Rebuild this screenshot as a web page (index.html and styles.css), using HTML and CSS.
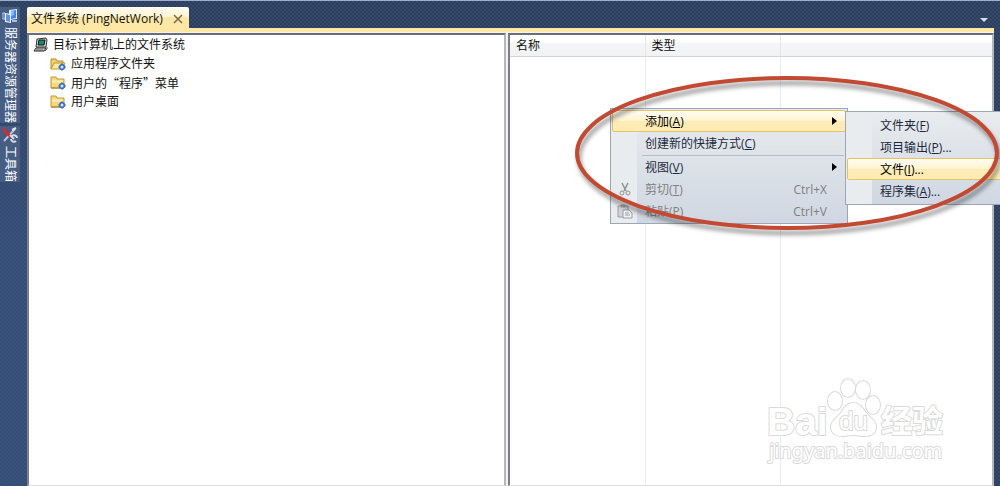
FILE: index.html
```html
<!DOCTYPE html>
<html lang="zh-CN">
<head>
<meta charset="utf-8">
<title>文件系统 (PingNetWork)</title>
<link rel="stylesheet" href="styles.css">
</head>
<body>
<div class="app">
  <nav class="rail" aria-label="工具窗口">
    <button class="rail-tab" type="button">
      <svg class="rail-icon" width="16" height="16" viewBox="0 0 16 16" aria-hidden="true">
        <path d="M7 2l8-1v10l-8 1z" fill="#dce8fa"/><path d="M9 3l5-1v8l-5 1z" fill="#3f86ee"/><path d="M9 3l3-1v5l-3 1z" fill="#8db9f7"/>
        <path d="M0 5l3-1v8l-3-1z" fill="#9fb4d4"/><path d="M0 7h3M0 9h3" stroke="#5574a4"/>
        <path d="M3 5l6 1v9l-6-1z" fill="#f2f6fc"/><path d="M4 6l4 1v7l-4-1z" fill="#5b94e8"/>
        <path d="M10 12h5v2h-5z" fill="#aebfda"/>
      </svg>
      <span class="rail-label">服务器资源管理器</span>
    </button>
    <button class="rail-tab" type="button">
      <svg class="rail-icon" width="16" height="16" viewBox="0 0 16 16" aria-hidden="true">
        <path d="M2 14L13 2" stroke="#b9c3d2" stroke-width="2"/>
        <path d="M10 3l4-2" stroke="#dfe5ee" stroke-width="2"/>
        <path d="M1 2l8 8" stroke="#dd2630" stroke-width="3"/>
        <path d="M8 8l4 4" stroke="#d8dfe9" stroke-width="2"/>
        <path d="M9 12a3 3 0 0 0 5 2M10 9a3 3 0 0 1 5 2" stroke="#d5deea" stroke-width="2" fill="none"/>
      </svg>
      <span class="rail-label">工具箱</span>
    </button>
  </nav>

  <main class="workspace">
    <header class="tabs">
      <div class="tab">
        <span>文件系统 (PingNetWork)</span>
        <button class="tab-close" type="button" aria-label="关闭">
          <svg width="10" height="10" viewBox="0 0 10 10"><path d="M1 1l8 8M9 1L1 9" stroke="#756a4b" stroke-width="1.5"/></svg>
        </button>
      </div>
      <button class="tab-list" type="button" aria-label="打开的文件">
        <svg width="8" height="4" viewBox="0 0 8 4"><path d="M0 0h8L4 4z" fill="#d5dceb"/></svg>
      </button>
    </header>

    <div class="panes">
      <section class="pane tree">
        <div class="node root">
          <svg width="16" height="16" viewBox="0 0 16 16" aria-hidden="true">
            <path d="M4 2l9-1 1 2-1 7H3z" fill="#d9d9d0" stroke="#333"/>
            <path d="M6 3h6l-1 5H5z" fill="#168b7b" stroke="#111"/>
            <path d="M3 11h10l-2 3H1z" fill="#e4e4dc" stroke="#222"/><path d="M3 13h7M14 10v2l-2 2" stroke="#555" fill="none"/>
          </svg>
          <span>目标计算机上的文件系统</span>
        </div>
        <div class="node">
          <svg width="17" height="16" viewBox="0 0 17 16" aria-hidden="true">
            <path d="M1 13V3h5l1 2h6v3" fill="#f2cf6c" stroke="#b48a2e"/>
            <path d="M1 13l3-6h11l-3 6z" fill="#ffeaa0" stroke="#c1963a"/>
            <path d="M12 7l4 4-4 4-4-4z" fill="#3c6fc4"/><circle cx="12" cy="11" r="3" fill="#3c6fc4"/><circle cx="12" cy="11" r="1.5" fill="#d5e6ff"/>
          </svg>
          <span>应用程序文件夹</span>
        </div>
        <div class="node">
          <svg width="17" height="16" viewBox="0 0 17 16" aria-hidden="true">
            <path d="M1 2h5l1 2h7v9H1z" fill="#f5d77d" stroke="#c09a40"/><path d="M2 6h11M2 7h11" stroke="#fff3bd"/><path d="M1 13h11" stroke="#a47a25"/>
            <path d="M12 7l4 4-4 4-4-4z" fill="#3c6fc4"/><circle cx="12" cy="11" r="3" fill="#3c6fc4"/><circle cx="12" cy="11" r="1.5" fill="#d5e6ff"/>
          </svg>
          <span class="cjk">用户的“程序”菜单</span>
        </div>
        <div class="node">
          <svg width="17" height="16" viewBox="0 0 17 16" aria-hidden="true">
            <path d="M1 2h5l1 2h7v9H1z" fill="#f5d77d" stroke="#c09a40"/><path d="M2 6h11M2 7h11" stroke="#fff3bd"/><path d="M1 13h11" stroke="#a47a25"/>
            <path d="M12 7l4 4-4 4-4-4z" fill="#3c6fc4"/><circle cx="12" cy="11" r="3" fill="#3c6fc4"/><circle cx="12" cy="11" r="1.5" fill="#d5e6ff"/>
          </svg>
          <span>用户桌面</span>
        </div>
      </section>

      <section class="pane list">
        <table class="files">
          <thead><tr><th class="col-name">名称</th><th class="col-type">类型</th><th></th></tr></thead>
          <tbody><tr><td></td><td></td><td></td></tr></tbody>
        </table>
      </section>
    </div>
  </main>

  <div class="menu context" role="menu">
    <button class="item active" type="button" role="menuitem"><span class="glyph"></span><span class="text">添加(<u>A</u>)</span><span class="arrow"></span></button>
    <button class="item" type="button" role="menuitem"><span class="glyph"></span><span class="text">创建新的快捷方式(<u>C</u>)</span></button>
    <div class="separator" role="separator"></div>
    <button class="item" type="button" role="menuitem"><span class="glyph"></span><span class="text">视图(<u>V</u>)</span><span class="arrow"></span></button>
    <button class="item" type="button" role="menuitem" disabled>
      <span class="glyph"><svg width="12" height="14" viewBox="0 0 12 14" fill="none" stroke="#8d9299"><path d="M3 1l4 8M9 1L5 9" stroke-width="1.5"/><circle cx="3" cy="11" r="2"/><circle cx="9" cy="11" r="2"/></svg></span>
      <span class="text">剪切(<u>T</u>)</span><span class="keys">Ctrl+X</span>
    </button>
    <button class="item" type="button" role="menuitem" disabled>
      <span class="glyph"><svg width="16" height="15" viewBox="0 0 16 15" fill="#d0d2d5" stroke="#9a9ea4"><path d="M1 2h10v11H1z"/><path d="M4 3V1h4v2z" fill="#a9adb3"/><path d="M6 6h6l3 3v5H6z" fill="#f0f1f2"/><path d="M8 9h4M8 11h5"/></svg></span>
      <span class="text">粘贴(<u>P</u>)</span><span class="keys">Ctrl+V</span>
    </button>
  </div>

  <div class="menu submenu" role="menu">
    <button class="item" type="button" role="menuitem"><span class="glyph"></span><span class="text">文件夹(<u>F</u>)</span></button>
    <button class="item" type="button" role="menuitem"><span class="glyph"></span><span class="text">项目输出(<u>P</u>)...</span></button>
    <button class="item active" type="button" role="menuitem"><span class="glyph"></span><span class="text">文件(<u>I</u>)...</span></button>
    <button class="item" type="button" role="menuitem"><span class="glyph"></span><span class="text">程序集(<u>A</u>)...</span></button>
  </div>

  <svg class="callout" width="432" height="166" viewBox="0 0 432 166" aria-hidden="true">
    <ellipse cx="215" cy="81" rx="210" ry="75"/>
  </svg>

  <svg class="watermark" width="190" height="100" viewBox="0 0 190 100">
    <g class="outline">
      <ellipse cx="73" cy="31" rx="7" ry="9"/>
      <ellipse cx="86" cy="18" rx="7" ry="9"/>
      <ellipse cx="101" cy="20" rx="7" ry="9"/>
      <ellipse cx="111" cy="35" rx="7" ry="9"/>
      <path d="M91 33c7 0 10 6 14 11 5 5 9 8 9 13 0 7-6 9-12 9-4 0-7-1-11-1s-7 1-11 1c-6 0-11-3-11-9s5-8 9-13 6-11 13-11z"/>
      <text class="brand" x="5" y="65">Bai</text>
      <text class="du" x="77" y="60">du</text>
      <text class="cn" x="119" y="62">经验</text>
      <text class="url" x="7" y="88">jingyan.baidu.com</text>
    </g>
  </svg>
</div>
</body>
</html>
```
FILE: styles.css
```css
* { box-sizing: border-box; }

body {
  margin: 0;
  overflow: hidden;
  font: 12px/19px "Open Sans", "Noto Sans CJK SC", sans-serif;
  color: #111;
}

button {
  border: 0;
  padding: 0;
  background: none;
  font: inherit;
  color: inherit;
  text-align: left;
}

svg { flex: none; display: block; }

.app {
  position: relative;
  display: flex;
  height: 100vh;
  padding-right: 6px;
  overflow: hidden;
  border-top: 1px solid #9cb0cb;
  background-color: #2c3f5f;
  background-image:
    radial-gradient(circle at 1px 1px, #36496a 1px, transparent 1px),
    radial-gradient(circle at 3px 3px, #36496a 1px, transparent 1px);
  background-size: 4px 4px;
}

.rail {
  display: flex;
  flex-direction: column;
  gap: 3px;
  width: 27px;
  padding-top: 6px;
  background: linear-gradient(rgba(62, 92, 143, 0), rgba(62, 92, 143, 0.5) 50%);
}

.rail-tab {
  display: flex;
  flex-direction: column;
  align-items: center;
  gap: 3px;
  width: 20px;
  padding: 1px 0 0;
  background: #465d84;
  color: #fff;
}

.rail-label {
  writing-mode: vertical-rl;
  text-orientation: sideways;
  line-height: 18px;
}

.workspace {
  flex: 1;
  display: flex;
  flex-direction: column;
  min-width: 0;
}

.tabs {
  display: flex;
  justify-content: space-between;
  padding-top: 6px;
  border-bottom: 4px solid #ffe8a6;
}

.tab {
  display: flex;
  align-items: center;
  gap: 10px;
  height: 21px;
  padding: 2px 6px 0 4px;
  border-radius: 2px 2px 0 0;
  background: linear-gradient(#fffcf2, #fff2cd 50%, #ffe8a6 50%);
}

.tab-list { padding: 4px 6px 0 0; }

.panes {
  flex: 1;
  display: grid;
  grid-template-columns: 479fr 486fr;
  gap: 2px;
  min-height: 0;
  background: #f2f2f2;
}

.pane {
  margin-top: 1px;
  border: 2px solid #9a9ea5;
  border-top-color: #6b6e74;
  border-left-color: #7b8088;
  border-right-color: #b4b8bd;
  border-bottom: 1px solid #dcdcdc;
  background: #fff;
}

.tree { padding-left: 4px; }

.node {
  display: flex;
  align-items: center;
  gap: 4px;
  padding-left: 17px;
}

.root { padding-left: 0; }
.cjk { font-family: "Noto Sans CJK SC", sans-serif; }

.files {
  width: 100%;
  height: 100%;
  table-layout: fixed;
  border-collapse: collapse;
}

.files th {
  height: 21px;
  padding: 0 0 0 6px;
  border-right: 1px solid #e3e8ee;
  border-bottom: 1px solid #d5d5d5;
  background: linear-gradient(#fff 40%, #f4f5f6 40%, #f1f2f4);
  font-weight: normal;
  text-align: left;
}

.files td { border-right: 1px solid #e6eefa; }
.files th:last-child, .files td:last-child { border-right: 0; }
.col-name { width: 135px; }
.col-type { width: 135px; }

/* Menus */
.menu {
  position: absolute;
  display: flex;
  flex-direction: column;
  border: 1px solid #9ba7b7;
  background:
    linear-gradient(#e9ecee, #e9ecee) left / 26px 100% no-repeat,
    linear-gradient(#e9ecee, #d0d7e2);
}

.context { left: 610px; top: 107px; width: 238px; padding: 1px; }
.submenu { left: 845px; top: 110px; width: 180px; padding: 2px 1px; }

.item {
  display: flex;
  align-items: center;
  height: 22px;
  padding-right: 8px;
  border: 1px solid transparent;
  border-radius: 2px;
  color: #1b293e;
}

.item.active {
  border-color: #e5c365;
  background: linear-gradient(#fffcf2, #fff3cf 50%, #ffecb5 50%);
  color: #000;
}

.item:disabled { color: #808080; }

.glyph {
  display: flex;
  justify-content: center;
  width: 24px;
  margin-right: 8px;
}

.text { flex: 1; }
.keys { padding-right: 10px; }

.arrow {
  border: 4px solid transparent;
  border-left: 5px solid #000;
  border-right: 0;
}

.separator {
  height: 1px;
  margin: 1px 2px 0 30px;
  background: #b5bdca;
}

/* Annotation ring */
.callout {
  position: absolute;
  left: 572px;
  top: 71px;
  fill: none;
  stroke: #c24a32;
  stroke-width: 4px;
  filter: drop-shadow(2px 5px 2px rgba(0, 0, 0, 0.4));
  pointer-events: none;
}

.watermark {
  position: absolute;
  left: 762px;
  top: 369px;
  pointer-events: none;
}

.outline {
  fill: #fff;
  stroke: #dadada;
  stroke-width: 2px;
  stroke-linejoin: round;
  paint-order: stroke;
}

.brand { font: bold 39px "Liberation Sans", sans-serif; }
.du { font: 26px "Liberation Sans", sans-serif; }
.cn { font: bold 31px "Noto Sans CJK SC", sans-serif; }
.url { font: 20px "Noto Sans", sans-serif; }
```
